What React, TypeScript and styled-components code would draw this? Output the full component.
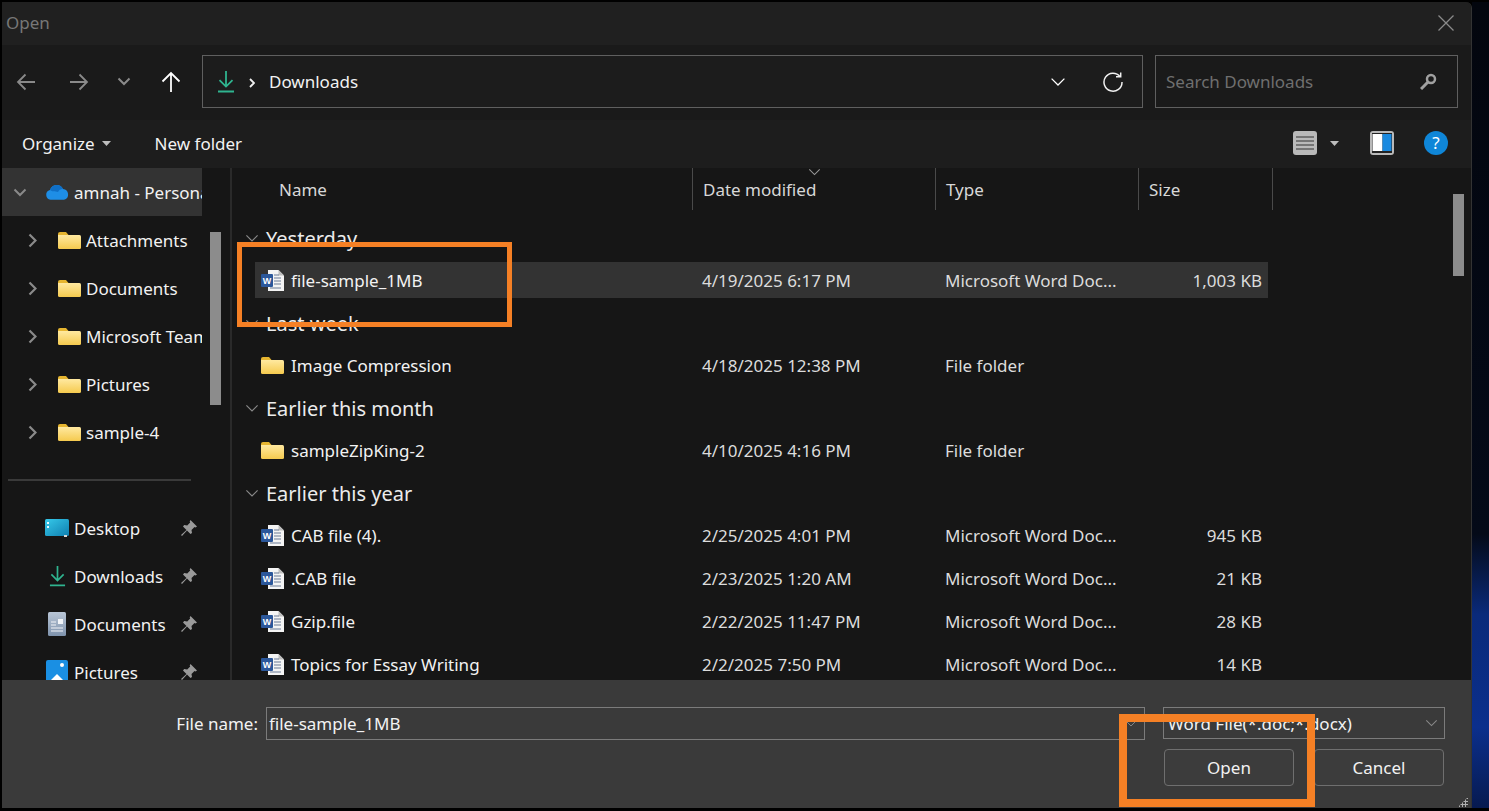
import React from "react";
import styled, { createGlobalStyle } from "styled-components";

const Global = createGlobalStyle`
  html, body { margin: 0; padding: 0; background: #000; }
  * { box-sizing: border-box; }
`;

const Screen = styled.div`
  position: relative;
  width: 1489px;
  height: 811px;
  overflow: hidden;
  display: flex;
  padding: 2px 0 3px 2px;
  background: #000;
  font-family: "Noto Sans", "Open Sans", sans-serif;
  color: #f2f2f2;
  font-size: 17px;
`;

const Dialog = styled.div`
  width: 1470px;
  flex: none;
  display: flex;
  flex-direction: column;
  background: #161616;
  border-right: 1px solid #333;
  border-top-right-radius: 6px;
  overflow: hidden;
`;

const Wallpaper = styled.div`
  flex: 1;
  background: linear-gradient(180deg, #03060e 0%, #040a18 66%, #0a2a7a 76%, #0b2f8c 90%, #071a50 100%);
`;

const TitleBar = styled.div`
  height: 43px;
  flex: none;
  display: flex;
  align-items: center;
  justify-content: space-between;
  padding: 0 17px 2px 4px;
  background: #202020;
  color: #777;
`;

const AddressRow = styled.div`
  height: 75px;
  flex: none;
  display: flex;
  align-items: center;
  padding: 0 13px 2px 14px;
  background: #1a1a1a;
`;

const NavButton = styled.span<{ $w: number; $ml?: number; $dim?: boolean }>`
  width: ${(p) => p.$w}px;
  margin-left: ${(p) => p.$ml ?? 0}px;
  flex: none;
  display: flex;
  align-items: center;
  justify-content: center;
  color: ${(p) => (p.$dim ? "#8a8a8a" : "#fff")};
`;

const AddressBox = styled.div`
  width: 941px;
  height: 53px;
  margin: 0 12px 0 21px;
  flex: none;
  display: flex;
  align-items: center;
  padding: 0 19px 0 14px;
  border: 1px solid #5f5f5f;
  background: #1c1c1c;
`;

const Crumb = styled.span`
  margin-left: 14px;
  flex: 1;
`;

const SearchBox = styled.div`
  flex: 1;
  height: 53px;
  display: flex;
  align-items: center;
  justify-content: space-between;
  padding: 0 20px 0 10px;
  border: 1px solid #5f5f5f;
  background: #1a1a1a;
  color: #6f6f6f;
`;

const CommandBar = styled.div`
  height: 48px;
  flex: none;
  display: flex;
  align-items: center;
  padding: 0 23px 2px 20px;
  background: #1d1d1d;
`;

const Command = styled.span<{ $mr: number; $gap?: number }>`
  margin-right: ${(p) => p.$mr}px;
  display: flex;
  align-items: center;
  gap: ${(p) => p.$gap ?? 7}px;
`;

const Spacer = styled.div`
  flex: 1;
`;

const Body = styled.div`
  flex: 1;
  min-height: 0;
  display: flex;
  background: #161616;
`;

const Sidebar = styled.aside`
  width: 230px;
  flex: none;
  position: relative;
  border-right: 2px solid #2a2a2a;
  overflow: hidden;
`;

const TreeColumn = styled.div`
  width: 200px;
  overflow: hidden;
`;

const TreeRow = styled.div<{ $selected?: boolean; $indent: number }>`
  height: 48px;
  display: flex;
  align-items: center;
  white-space: nowrap;
  overflow: hidden;
  padding-left: ${(p) => p.$indent}px;
  background: ${(p) => (p.$selected ? "#333" : "transparent")};
`;

const Chevron = styled.span<{ $w: number }>`
  width: ${(p) => p.$w}px;
  flex: none;
  display: flex;
  color: #8a8a8a;
`;

const IconSlot = styled.span<{ $w: number }>`
  width: ${(p) => p.$w}px;
  flex: none;
  display: flex;
  align-items: center;
  justify-content: center;
`;

const RowLabel = styled.span`
  margin-left: 5px;
`;

const Divider = styled.div`
  width: 183px;
  height: 2px;
  margin: 23px 0 23px 6px;
  background: #3a3a3a;
`;

const PinnedRow = styled.div`
  height: 48px;
  display: flex;
  align-items: center;
  padding-left: 43px;
  width: 200px;
`;

const PinnedLabel = styled(RowLabel)`
  flex: 1;
`;

const ScrollThumb = styled.div<{ $x: number; $y: number; $h: number }>`
  position: absolute;
  left: ${(p) => p.$x}px;
  top: ${(p) => p.$y}px;
  width: 11px;
  height: ${(p) => p.$h}px;
  background: #8c8c8c;
`;

const Main = styled.section`
  flex: 1;
  position: relative;
  overflow: hidden;
  padding-left: 23px;
`;

const HeaderRow = styled.div`
  height: 47px;
  margin-bottom: 2px;
  display: grid;
  grid-template-columns: 437px 243px 203px 135px;
  color: #d8d8d8;
`;

const HeaderCell = styled.div<{ $first?: boolean; $last?: boolean }>`
  height: 42px;
  display: flex;
  align-items: center;
  padding-left: ${(p) => (p.$first ? 24 : 10)}px;
  border-left: ${(p) => (p.$first ? "none" : "1px solid #4a4a4a")};
  border-right: ${(p) => (p.$last ? "1px solid #4a4a4a" : "none")};
  position: relative;
`;

const SortMark = styled.span`
  position: absolute;
  left: 115px;
  top: 0;
  color: #999;
  display: flex;
`;

const GroupHeading = styled.div`
  height: 42px;
  margin-left: -10px;
  display: flex;
  align-items: center;
  gap: 7px;
  font-size: 20px;
  color: #ececec;
`;

const GroupChevron = styled.span`
  width: 14px;
  display: flex;
  color: #8a8a8a;
`;

const FileRowOuter = styled.div`
  height: 43px;
  padding-top: 3px;
`;

const FileRowInner = styled.div<{ $selected?: boolean }>`
  width: 1013px;
  height: 36px;
  display: grid;
  grid-template-columns: 437px 243px 203px 130px;
  align-items: center;
  background: ${(p) => (p.$selected ? "#333" : "transparent")};
`;

const NameCell = styled.div`
  display: flex;
  align-items: center;
  padding-left: 6px;
  gap: 7px;
`;

const Cell = styled.div`
  padding-left: 10px;
  color: #dcdcdc;
  white-space: nowrap;
`;

const SizeCell = styled(Cell)`
  padding: 0 6px 0 0;
  text-align: right;
`;

const Footer = styled.div`
  height: 128px;
  flex: none;
  background: #3a3a3a;
  display: grid;
  grid-template-columns: 1143px 1fr;
  padding: 27px 27px 0 0;
`;

const NameField = styled.div`
  display: flex;
  align-items: flex-start;
  justify-content: flex-end;
  gap: 8px;
`;

const FieldLabel = styled.span`
  height: 33px;
  display: flex;
  align-items: center;
`;

const TextBox = styled.div`
  width: 879px;
  height: 33px;
  padding: 0 6px 0 2px;
  display: flex;
  align-items: center;
  justify-content: space-between;
  border: 1px solid #7b7b7b;
`;

const ActionColumn = styled.div`
  margin-left: 18px;
  display: flex;
  flex-direction: column;
`;

const TypeSelect = styled.div`
  width: 282px;
  height: 32px;
  padding: 0 6px 0 4px;
  display: flex;
  align-items: center;
  justify-content: space-between;
  border: 1px solid #7b7b7b;
  white-space: nowrap;
`;

const Buttons = styled.div`
  margin: 10px 0 0 1px;
  display: flex;
  gap: 20px;
`;

const Button = styled.button`
  width: 130px;
  height: 37px;
  padding: 0;
  border: 1px solid #6f6f6f;
  border-radius: 4px;
  background: #3c3c3c;
  color: #f2f2f2;
  font: inherit;
`;

const Callout = styled.div<{ $x: number; $y: number; $w: number; $h: number; $t: number }>`
  position: absolute;
  left: ${(p) => p.$x}px;
  top: ${(p) => p.$y}px;
  width: ${(p) => p.$w}px;
  height: ${(p) => p.$h}px;
  border: ${(p) => p.$t}px solid #f58025;
`;

const Grip = styled.div`
  position: absolute;
  left: 1458px;
  bottom: 4px;
  width: 10px;
  height: 10px;
  background-image: radial-gradient(#b0b0b0 1px, transparent 1.2px);
  background-size: 3px 3px;
  clip-path: polygon(100% 0, 100% 100%, 0 100%);
`;

const ArrowLeft = ({ right }: { right?: boolean }) => (
  <svg width="20" height="20" viewBox="0 0 20 20" fill="none" stroke="currentColor" strokeWidth="1.8" style={right ? { transform: "scaleX(-1)" } : undefined}>
    <path d="M19 10H2M9.500 2.500 2 10l7.500 7.500" />
  </svg>
);

const ArrowUp = () => (
  <svg width="20" height="22" viewBox="0 0 20 22" fill="none" stroke="currentColor" strokeWidth="1.8">
    <path d="M10 21V2M1.500 10.500 10 2l8.500 8.500" />
  </svg>
);

const SmallDown = () => (
  <svg width="14" height="9" viewBox="0 0 14 9" fill="none" stroke="currentColor" strokeWidth="2">
    <path d="M1.500 1.500 7 7l5.500-5.500" />
  </svg>
);

const Caret = () => (
  <svg width="9" height="5" viewBox="0 0 9 5" fill="#bdbdbd">
    <path d="M0 0h9L4.500 5z" />
  </svg>
);

const ThinDown = ({ size = 16 }: { size?: number }) => (
  <svg width={size} height={size * 0.6} viewBox="0 0 20 12" fill="none" stroke="currentColor" strokeWidth="1.6">
    <path d="M2 2l8 8 8-8" />
  </svg>
);

const TreeArrow = () => (
  <svg width="9" height="15" viewBox="0 0 9 15" fill="none" stroke="currentColor" strokeWidth="2.2">
    <path d="M1.500 1.500 7.500 7.500l-6 6" />
  </svg>
);

const DownloadArrow = ({ size = 18 }: { size?: number }) => (
  <svg width={size} height={size * 1.28} viewBox="0 0 18 23" fill="none" stroke="#2fb48f" strokeWidth="1.8">
    <path d="M9 1v15M2.500 10 9 16.500 15.500 10M1 21.500h16" />
  </svg>
);

const FolderGradient = () => (
  <svg width="0" height="0" style={{ position: "absolute" }}>
    <defs>
      <linearGradient id="folderFill" x1="0" y1="0" x2="0" y2="1">
        <stop offset="0" stopColor="#ffe9a0" />
        <stop offset="1" stopColor="#f5ca4e" />
      </linearGradient>
    </defs>
  </svg>
);

const Folder = () => (
  <svg width="23" height="17" viewBox="0 0 23 17" style={{ flex: "none" }}>
    <path d="M0 2a2 2 0 0 1 2-2h6l2.500 3H0z" fill="#e6b530" />
    <path d="M0 3h21.500A1.500 1.500 0 0 1 23 4.500v11a1.500 1.500 0 0 1-1.500 1.500h-20A1.500 1.500 0 0 1 0 15.500z" fill="url(#folderFill)" />
  </svg>
);

const WordDoc = () => (
  <svg width="23" height="21" viewBox="0 0 23 21" style={{ flex: "none" }}>
    <path d="M7 0h10.500L23 5.500V21H7z" fill="#f4f4f4" />
    <path d="M17.500 0v5.500H23z" fill="#bdbdbd" />
    <path d="M13 5h5M13 8h7M13 11h7M13 14h7M9 18h11" stroke="#6a7a96" strokeWidth="1.1" />
    <rect x="0" y="4" width="12" height="13" rx="1" fill="#2b579a" />
    <text x="6" y="14" textAnchor="middle" fontSize="9" fontWeight="700" fill="#fff" fontFamily="Liberation Sans">W</text>
  </svg>
);

const Cloud = () => (
  <svg width="24" height="16" viewBox="0 0 24 16" style={{ flex: "none" }}>
    <path d="M5.500 15.800A5 5 0 0 1 5 6a7 7 0 0 1 13-1 5.500 5.500 0 0 1 1 10.800z" fill="#1e8ee6" />
    <path d="M5 6a7 7 0 0 1 13-1c-3 0-4 1-5 3-3-1-6 0-8-2z" fill="#0f6fc6" />
  </svg>
);

const DesktopIcon = () => (
  <svg width="24" height="18" viewBox="0 0 24 18">
    <defs>
      <linearGradient id="deskFill" x1="0" y1="0" x2="1" y2="1">
        <stop offset="0" stopColor="#36c9ea" />
        <stop offset="1" stopColor="#0f7fb0" />
      </linearGradient>
    </defs>
    <rect width="24" height="17" rx="1.5" fill="url(#deskFill)" />
    <rect x="2" y="3" width="2" height="2" fill="#e8fbff" />
    <rect x="2" y="7" width="2" height="2" fill="#e8fbff" />
    <rect x="19" y="16" width="3" height="2" fill="#d8d8d8" />
  </svg>
);

const DocumentsIcon = () => (
  <svg width="18" height="24" viewBox="0 0 18 24">
    <defs>
      <linearGradient id="docFill" x1="0" y1="0" x2="0" y2="1">
        <stop offset="0" stopColor="#b9c6d6" />
        <stop offset="1" stopColor="#7f93ad" />
      </linearGradient>
    </defs>
    <rect width="18" height="24" rx="1.5" fill="url(#docFill)" />
    <path d="M3 10h5M3 13h5M3 16h12M3 19h12" stroke="#f1f4f8" strokeWidth="1.2" />
    <rect x="10" y="7" width="5" height="5" fill="#f1f4f8" />
  </svg>
);

const PicturesIcon = () => (
  <svg width="22" height="24" viewBox="0 0 22 24">
    <rect width="22" height="24" rx="2" fill="#1a8fe3" />
    <circle cx="16" cy="5" r="2" fill="#fff" />
    <path d="M1 24l10-10 10 10z" fill="#fff" />
  </svg>
);

const Pin = () => (
  <svg width="16" height="16" viewBox="0 0 16 16" fill="#9a9a9a">
    <path d="M9.500 0 16 6.500l-1.500 1-1-.5-3 3 .5 3L9.500 14 6 10.500 1 16l-1-1 5.500-5L2 6.500 3.200 5l3 .5 3-3-.5-1z" />
  </svg>
);

const CloseIcon = () => (
  <svg width="16" height="16" viewBox="0 0 16 16" fill="none" stroke="#8a8a8a" strokeWidth="1.3">
    <path d="M.5.500l15 15M15.500.500l-15 15" />
  </svg>
);

const RefreshIcon = () => (
  <svg width="20" height="20" viewBox="0 0 20 20" fill="none" stroke="#f0f0f0" strokeWidth="1.5">
    <path d="M17 4.500A9 9 0 1 0 19 10" />
    <path d="M13 4.800h4.700V.500" />
  </svg>
);

const SearchIcon = () => (
  <svg width="17" height="17" viewBox="0 0 17 17" fill="none" stroke="#a0a0a0">
    <circle cx="11" cy="6" r="4" strokeWidth="2.500" />
    <path d="M8 9l-7 7" strokeWidth="3" />
  </svg>
);

const ViewIcon = () => (
  <svg width="24" height="24" viewBox="0 0 24 24">
    <rect width="24" height="24" rx="3" fill="#b9b9b9" />
    <path d="M3 6h18M3 10h18M3 14h18M3 18h18" stroke="#333" strokeWidth="1.2" />
  </svg>
);

const PaneIcon = () => (
  <svg width="24" height="24" viewBox="0 0 24 24">
    <rect width="24" height="24" rx="3" fill="#b9b9b9" />
    <rect x="2" y="2" width="20" height="20" fill="#222" />
    <rect x="2.500" y="3" width="10" height="17" fill="#fff" />
    <rect x="12.500" y="3" width="9" height="17" fill="#1a8ae0" />
  </svg>
);

const HelpIcon = () => (
  <svg width="24" height="24" viewBox="0 0 24 24">
    <circle cx="12" cy="12" r="12" fill="#0f86d8" />
    <text x="12" y="18" textAnchor="middle" fontSize="17" fill="#fff" fontFamily="Noto Sans">?</text>
  </svg>
);

const treeItems = ["Attachments", "Documents", "Microsoft Teams Chat Files", "Pictures", "sample-4"];

const pinned = [
  { label: "Desktop", icon: <DesktopIcon /> },
  { label: "Downloads", icon: <DownloadArrow size={17} /> },
  { label: "Documents", icon: <DocumentsIcon /> },
  { label: "Pictures", icon: <PicturesIcon /> },
];

const word = "Microsoft Word Doc...";

const groups = [
  { title: "Yesterday", files: [{ name: "file-sample_1MB", date: "4/19/2025 6:17 PM", type: word, size: "1,003 KB", selected: true }] },
  { title: "Last week", files: [{ name: "Image Compression", date: "4/18/2025 12:38 PM", type: "File folder", size: "", folder: true }] },
  { title: "Earlier this month", files: [{ name: "sampleZipKing-2", date: "4/10/2025 4:16 PM", type: "File folder", size: "", folder: true }] },
  {
    title: "Earlier this year",
    files: [
      { name: "CAB file (4).", date: "2/25/2025 4:01 PM", type: word, size: "945 KB" },
      { name: ".CAB file", date: "2/23/2025 1:20 AM", type: word, size: "21 KB" },
      { name: "Gzip.file", date: "2/22/2025 11:47 PM", type: word, size: "28 KB" },
      { name: "Topics for Essay Writing", date: "2/2/2025 7:50 PM", type: word, size: "14 KB" },
    ],
  },
];

export default function App() {
  return (
    <Screen>
      <Global />
      <FolderGradient />
      <Dialog>
        <TitleBar>
          <span>Open</span>
          <CloseIcon />
        </TitleBar>
        <AddressRow>
          <NavButton $w={20} $dim><ArrowLeft /></NavButton>
          <NavButton $w={20} $ml={33} $dim><ArrowLeft right /></NavButton>
          <NavButton $w={14} $ml={28} $dim><SmallDown /></NavButton>
          <NavButton $w={20} $ml={30}><ArrowUp /></NavButton>
          <AddressBox>
            <DownloadArrow />
            <Crumb>
              <svg width="7" height="10" viewBox="0 0 7 10" fill="none" stroke="#f0f0f0" strokeWidth="1.8" style={{ marginRight: 13 }}>
                <path d="M1 1l4 4-4 4" />
              </svg>
              Downloads
            </Crumb>
            <NavButton $w={17} style={{ marginRight: 37 }}><ThinDown /></NavButton>
            <RefreshIcon />
          </AddressBox>
          <SearchBox>
            <span>Search Downloads</span>
            <SearchIcon />
          </SearchBox>
        </AddressRow>
        <CommandBar>
          <Command $mr={44}>Organize <Caret /></Command>
          <Command $mr={0}>New folder</Command>
          <Spacer />
          <Command $mr={31} $gap={13}><ViewIcon /> <Caret /></Command>
          <Command $mr={30}><PaneIcon /></Command>
          <HelpIcon />
        </CommandBar>
        <Body>
          <Sidebar>
            <TreeColumn>
              <TreeRow $selected $indent={11}>
                <Chevron $w={32}><SmallDown /></Chevron>
                <Cloud />
                <RowLabel>amnah - Personal</RowLabel>
              </TreeRow>
              {treeItems.map((item) => (
                <TreeRow key={item} $indent={26}>
                  <Chevron $w={30}><TreeArrow /></Chevron>
                  <IconSlot $w={23}><Folder /></IconSlot>
                  <RowLabel>{item}</RowLabel>
                </TreeRow>
              ))}
              <Divider />
              {pinned.map((p) => (
                <PinnedRow key={p.label}>
                  <IconSlot $w={24}>{p.icon}</IconSlot>
                  <PinnedLabel>{p.label}</PinnedLabel>
                  <IconSlot $w={26}><Pin /></IconSlot>
                </PinnedRow>
              ))}
            </TreeColumn>
            <ScrollThumb $x={208} $y={64} $h={173} />
          </Sidebar>
          <Main>
            <HeaderRow>
              <HeaderCell $first>Name</HeaderCell>
              <HeaderCell>
                <SortMark><ThinDown size={13} /></SortMark>
                Date modified
              </HeaderCell>
              <HeaderCell>Type</HeaderCell>
              <HeaderCell $last>Size</HeaderCell>
            </HeaderRow>
            {groups.map((g) => (
              <div key={g.title}>
                <GroupHeading>
                  <GroupChevron><ThinDown size={14} /></GroupChevron>
                  {g.title}
                </GroupHeading>
                {g.files.map((f) => (
                  <FileRowOuter key={f.name}>
                    <FileRowInner $selected={"selected" in f}>
                      <NameCell>
                        {"folder" in f ? <Folder /> : <WordDoc />}
                        <span>{f.name}</span>
                      </NameCell>
                      <Cell>{f.date}</Cell>
                      <Cell>{f.type}</Cell>
                      <SizeCell>{f.size}</SizeCell>
                    </FileRowInner>
                  </FileRowOuter>
                ))}
              </div>
            ))}
            <ScrollThumb $x={1221} $y={26} $h={82} />
          </Main>
        </Body>
        <Footer>
          <NameField>
            <FieldLabel>File name:</FieldLabel>
            <TextBox>
              file-sample_1MB
              <NavButton $w={14} $dim><ThinDown size={12} /></NavButton>
            </TextBox>
          </NameField>
          <ActionColumn>
            <TypeSelect>
              Word File(*.doc;*.docx)
              <NavButton $w={14} $dim><ThinDown size={13} /></NavButton>
            </TypeSelect>
            <Buttons>
              <Button>Open</Button>
              <Button>Cancel</Button>
            </Buttons>
          </ActionColumn>
        </Footer>
      </Dialog>
      <Wallpaper />
      <Grip />
      <Callout $x={237} $y={242} $w={275} $h={85} $t={5} />
      <Callout $x={1119} $y={714} $w={196} $h={93} $t={8} />
    </Screen>
  );
}
